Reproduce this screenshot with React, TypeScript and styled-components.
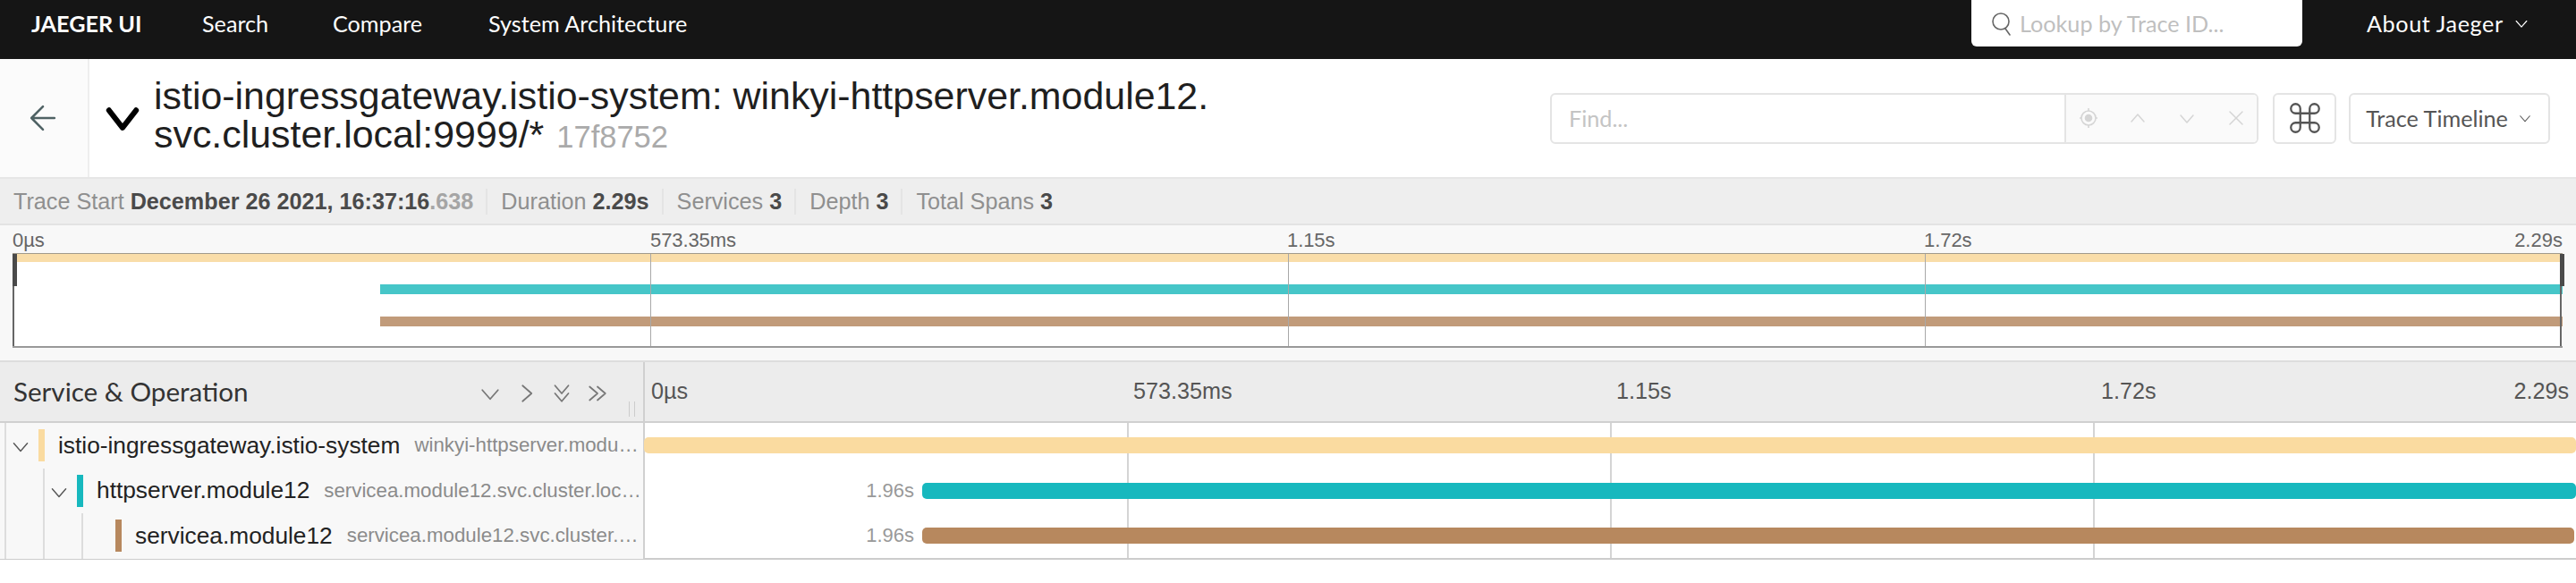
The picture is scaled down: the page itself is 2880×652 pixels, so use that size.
import React from "react";
import styled, { createGlobalStyle } from "styled-components";

const Global = createGlobalStyle`
  html, body { margin: 0; padding: 0; background: #fff; overflow: hidden; }
  * { box-sizing: border-box; }
`;
const ui = `Lato, "Open Sans", sans-serif`;
const sans = `"Liberation Sans", Arial, sans-serif`;

const Page = styled.div`width: 2880px; height: 652px; font-family: ${sans}; overflow: hidden;`;

const Nav = styled.nav`
  display: flex; height: 66px; background: #151515; color: #fff; font-family: ${ui};
  font-size: 25.2px; line-height: 52px; padding-left: 35px; position: relative;
`;
const Brand = styled.span`font-weight: 700; width: 191px;`;
const NavLink = styled.span<{ $w: number }>`width: ${p => p.$w}px; white-space: nowrap;`;
const NavSpacer = styled.div`flex: 1;`;
const Lookup = styled.div`
  width: 370px; height: 52px; background: #fff; border-radius: 0 0 6px 6px; display: flex; align-items: center;
  padding-left: 21px; gap: 7px; color: #bfbfbf; margin-right: 72px;
`;
const About = styled.div`display: flex; align-items: center; height: 52px; gap: 10px; width: 234px; letter-spacing: 0.6px;`;

const Header = styled.header`display: flex; height: 132px; align-items: center; background: #fff;`;
const BackBtn = styled.div`
  width: 100px; height: 132px; background: #fbfbfb; border-right: 2px solid #eee; padding-right: 3px;
  display: flex; align-items: center; justify-content: center; color: #4f6264; flex: none;
`;
const Collapse = styled.div`width: 72px; display: flex; justify-content: flex-end; padding-right: 9px; flex: none;`;
const Title = styled.h1`
  margin: 0; font-weight: 400; font-size: 42.9px; line-height: 43px; color: #1f1f1f; width: 1561px; flex: none;
  padding-bottom: 4px;
`;
const TraceId = styled.small`font-size: 34.5px; color: #aaa; margin-left: 14px;`;
const FindBox = styled.div`
  display: flex; width: 792px; height: 57px; border: 2px solid #e4e4e4; border-radius: 6px; flex: none; overflow: hidden;
`;
const FindInput = styled.div`
  width: 575px; height: 100%; padding-left: 19px; display: flex; align-items: center; font-family: ${ui};
  font-size: 25.2px; color: #c4c4c4; border-right: 2px solid #e4e4e4;
`;
const FindActions = styled.div`flex: 1; background: #fafafa; display: flex; align-items: center; gap: 31px; padding-left: 13px; color: #d5d5d5;`;
const BoxBtn = styled.div<{ $w: number; $ml: number }>`
  width: ${p => p.$w}px; margin-left: ${p => p.$ml}px; height: 57px; border: 2px solid #e4e4e4; border-radius: 6px;
  display: flex; align-items: center; justify-content: center; gap: 10px; flex: none; color: #555;
  font-family: ${ui}; font-size: 25.2px;
`;

const Sub = styled.div`
  display: flex; height: 54px; background: #eee; border-top: 2px solid #e6e6e6; border-bottom: 2px solid #e3e3e3;
  align-items: center; padding-left: 15px; font-size: 25.2px; color: #8f8f8f;
`;
const SubItem = styled.span<{ $last?: boolean }>`
  white-space: nowrap; padding-right: 14px; margin-right: 15px; border-right: ${p => (p.$last ? "none" : "2px solid #e4e4e4")};
`;
const Strong = styled.strong`color: #4a4a4a; font-weight: 700;`;
const Dim = styled.span`color: #a5a5a5; font-weight: 700;`;

const Mini = styled.section`height: 153px; background: #f8f8f8; padding: 5px 15px 0 14px; border-bottom: 2px solid #ddd;`;
const MiniLabels = styled.div`display: flex; justify-content: space-between; height: 26px; font-size: 22px; line-height: 24px; color: #666;`;
const MiniLabelsInner = styled.span<{ $w: number }>`width: ${p => p.$w}px; letter-spacing: -0.1px;`;
const Canvas = styled.div`
  position: relative; height: 106px; background: #fff; border-top: 1px solid #a09a8c; border-bottom: 2px solid #999;
  display: flex; flex-direction: column;
`;
const MiniLane = styled.div<{ $mt: number; $c: string; $ml: number; $h: number }>`
  height: ${p => p.$h}px; margin-top: ${p => p.$mt}px; margin-left: ${p => p.$ml}px; background: ${p => p.$c}; flex: none;
`;
const MiniTick = styled.i<{ $at: number }>`position: absolute; top: 0; bottom: 0; left: ${p => p.$at}%; width: 1px; background: #a8a8a8;`;
const Edge = styled.i<{ $right?: boolean }>`
  position: absolute; top: 0; bottom: 0; width: 2px; background: #666; ${p => (p.$right ? "right: 1px;" : "left: 0;")}
`;
const Handle = styled.i<{ $right?: boolean }>`
  position: absolute; top: 0; height: 36px; width: 5px; background: #4a4a4a; ${p => (p.$right ? "right: -2px;" : "left: 0;")}
`;

const Table = styled.section`position: relative;`;
const TableHead = styled.div`display: grid; grid-template-columns: 721px 1fr; height: 68px; background: #ececec; border-bottom: 2px solid #d0d0d0;`;
const HeadLeft = styled.div`
  position: relative; display: flex; align-items: center; padding-left: 15px; border-right: 2px solid #d0d0d0;
  font-size: 29.6px; color: #333; font-family: ${ui}; padding-bottom: 2px;
`;
const HeadIcons = styled.div`position: absolute; left: 533px; top: 20px; display: flex; gap: 10px; color: #777;`;
const Grip = styled.i`position: absolute; left: 703px; top: 44px; width: 7px; height: 17px; border-left: 1px solid #ccc; border-right: 1px solid #ccc;`;
const HeadRight = styled.div`display: grid; grid-template-columns: 539px 540px 540px 1fr; font-size: 25.2px; color: #555; align-items: center; padding-bottom: 2px;`;
const HeadTick = styled.span`padding-left: 7px; white-space: nowrap;`;
const LastCell = styled.span`display: flex; justify-content: space-between; padding: 0 8px 0 9px;`;

const GridLines = styled.i<{ $at: number }>`position: absolute; top: 0; bottom: 0; left: ${p => p.$at}px; width: 2px; background: #d4d4d4;`;
const Rows = styled.div`position: relative; height: 153px; border-bottom: 2px solid #ccc;`;
const Row = styled.div`position: relative; display: grid; grid-template-columns: 721px 1fr; height: 50.5px;`;
const Left = styled.div<{ $depth: number }>`
  display: flex; align-items: center; background: #f8f8f8; border-right: 2px solid #d0d0d0; overflow: hidden;
  padding-left: ${p => 43 + p.$depth * 43}px; position: relative;
`;
const Guide = styled.i<{ $at: number }>`position: absolute; top: 0; bottom: 0; left: ${p => p.$at}px; width: 2px; background: #ddd;`;
const Toggle = styled.span<{ $at: number }>`position: absolute; top: 13px; left: ${p => p.$at}px; color: #555; display: flex;`;
const ColorBar = styled.i<{ $c: string }>`width: 7px; height: 36px; background: ${p => p.$c}; flex: none; margin-right: 15px;`;
const Service = styled.span`font-size: 26.3px; color: #222; white-space: nowrap;`;
const Op = styled.span`
  font-size: 22.3px; color: #8b8b8b; margin-left: 16px; white-space: nowrap; overflow: hidden; text-overflow: ellipsis;
  padding-right: 2px; flex: 1; min-width: 0;
`;
const Right = styled.div`position: relative; display: flex; align-items: center; z-index: 1;`;
const SpanLabel = styled.span`position: absolute; right: 1858px; font-size: 22px; color: #999;`;
const SpanBar = styled.div<{ $c: string; $l: number; $r: number }>`
  position: absolute; left: ${p => p.$l}px; right: ${p => p.$r}px; height: 18px; background: ${p => p.$c}; border-radius: 5px;
`;

const Thin = ({ d, s = 24, w = 1.5, vb = 24 }: { d: string; s?: number; w?: number; vb?: number }) => (
  <svg width={s} height={s} viewBox={`0 0 ${vb} ${vb}`} fill="none" stroke="currentColor" strokeWidth={w} strokeLinecap="round" strokeLinejoin="round">
    <path d={d} />
  </svg>
);
const DOWN = "M5 9l7 8 7-8";
const UP = "M5 16l7-8 7 8";
const RIGHT = "M9 5l8 7-8 7";

const ticks = ["0µs", "573.35ms", "1.15s"];
const rows = [
  { depth: 0, c: "#fadba0", svc: "istio-ingressgateway.istio-system", op: "winkyi-httpserver.module12.svc.cluster.local:9999/*", l: -1, r: 0, toggle: 10 },
  { depth: 1, c: "#17b8be", svc: "httpserver.module12", op: "servicea.module12.svc.cluster.local:80/*", l: 310, r: 0, label: "1.96s", toggle: 53 },
  { depth: 2, c: "#b7885e", svc: "servicea.module12", op: "servicea.module12.svc.cluster.local:80/*", l: 310, r: 2, label: "1.96s" },
] as { depth: number; c: string; svc: string; op: string; l: number; r: number; label?: string; toggle?: number }[];

export default function App() {
  return (
    <Page>
      <Global />
      <Nav>
        <Brand>JAEGER UI</Brand>
        <NavLink $w={146}>Search</NavLink>
        <NavLink $w={174}>Compare</NavLink>
        <NavLink $w={220}>System Architecture</NavLink>
        <NavSpacer />
        <Lookup>
          <svg width="26" height="30" viewBox="0 0 26 30" fill="none" stroke="#666" strokeWidth="1.6" strokeLinecap="round">
            <circle cx="12" cy="13" r="9" />
            <path d="M17 21l5 7" />
          </svg>
          Lookup by Trace ID...
        </Lookup>
        <About>
          About Jaeger
          <Thin d={DOWN} s={20} w={1.4} />
        </About>
      </Nav>
      <Header>
        <BackBtn>
          <Thin d="M19 12H5M12 5l-7 7 7 7" s={44} w={1.4} />
        </BackBtn>
        <Collapse>
          <Thin d="M5 8l7 9 7-9" s={52} w={2.8} />
        </Collapse>
        <Title>
          istio-ingressgateway.istio-system: winkyi-httpserver.module12.
          <br />
          svc.cluster.local:9999/*<TraceId>17f8752</TraceId>
        </Title>
        <FindBox>
          <FindInput>Find...</FindInput>
          <FindActions>
            <svg width="24" height="24" viewBox="0 0 24 24" fill="none" stroke="currentColor" strokeWidth="1.6">
              <circle cx="12" cy="12" r="8" />
              <circle cx="12" cy="12" r="3.500" fill="currentColor" />
              <path d="M12 1v3M12 20v3M2 12h2M20 12h2" />
            </svg>
            <Thin d={UP} />
            <Thin d={DOWN} />
            <Thin d="M5 5l14 14M19 5L5 19" />
          </FindActions>
        </FindBox>
        <BoxBtn $w={71} $ml={16}>
          <Thin d="M15 6v12a3 3 0 1 0 3-3H6a3 3 0 1 0 3 3V6a3 3 0 1 0-3 3h12a3 3 0 1 0-3-3" s={42} w={1.3} />
        </BoxBtn>
        <BoxBtn $w={225} $ml={14}>
          Trace Timeline
          <Thin d={DOWN} s={18} w={1.5} />
        </BoxBtn>
      </Header>
      <Sub>
        <SubItem>Trace Start <Strong>December 26 2021, 16:37:16</Strong><Dim>.638</Dim></SubItem>
        <SubItem>Duration <Strong>2.29s</Strong></SubItem>
        <SubItem>Services <Strong>3</Strong></SubItem>
        <SubItem>Depth <Strong>3</Strong></SubItem>
        <SubItem $last>Total Spans <Strong>3</Strong></SubItem>
      </Sub>
      <Mini>
        <MiniLabels>
          <MiniLabelsInner $w={713}>0µs</MiniLabelsInner>
          <MiniLabelsInner $w={712}>573.35ms</MiniLabelsInner>
          <MiniLabelsInner $w={712}>1.15s</MiniLabelsInner>
          <MiniLabelsInner $w={660}>1.72s</MiniLabelsInner>
          <span>2.29s</span>
        </MiniLabels>
        <Canvas>
          <MiniLane $mt={0} $h={9} $c="#f9dda9" $ml={0} />
          <MiniLane $mt={25} $h={11} $c="#46c6c8" $ml={411} />
          <MiniLane $mt={25} $h={11} $c="#c19b7a" $ml={411} />
          <MiniTick $at={25} />
          <MiniTick $at={50} />
          <MiniTick $at={75} />
          <Edge />
          <Edge $right />
          <Handle />
          <Handle $right />
        </Canvas>
      </Mini>
      <Table>
        <TableHead>
          <HeadLeft>
            Service &amp; Operation
            <HeadIcons>
              <Thin d={DOWN} s={30} w={1.4} />
              <Thin d={RIGHT} s={30} w={1.4} />
              <Thin d="M6 5l6 7 6-7M6 12l6 7 6-7" s={30} w={1.4} />
              <Thin d="M5 6l7 6-7 6M12 6l7 6-7 6" s={30} w={1.4} />
            </HeadIcons>
            <Grip />
          </HeadLeft>
          <HeadRight>
            {ticks.map(t => <HeadTick key={t}>{t}</HeadTick>)}
            <LastCell>
              <span>1.72s</span>
              <span>2.29s</span>
            </LastCell>
          </HeadRight>
        </TableHead>
        <Rows>
          <GridLines $at={1260} />
          <GridLines $at={1800} />
          <GridLines $at={2340} />
          {rows.map(r => (
            <Row key={r.svc}>
              <Left $depth={r.depth}>
                {Array.from({ length: r.depth + 1 }).map((_, i) => <Guide key={i} $at={5 + i * 43} />)}
                {r.toggle !== undefined && (
                  <Toggle $at={r.toggle}>
                    <Thin d={DOWN} s={26} w={1.3} />
                  </Toggle>
                )}
                <ColorBar $c={r.c} />
                <Service>{r.svc}</Service>
                <Op>{r.op}</Op>
              </Left>
              <Right>
                {r.label && <SpanLabel>{r.label}</SpanLabel>}
                <SpanBar $c={r.c} $l={r.l} $r={r.r} />
              </Right>
            </Row>
          ))}
        </Rows>
      </Table>
    </Page>
  );
}
